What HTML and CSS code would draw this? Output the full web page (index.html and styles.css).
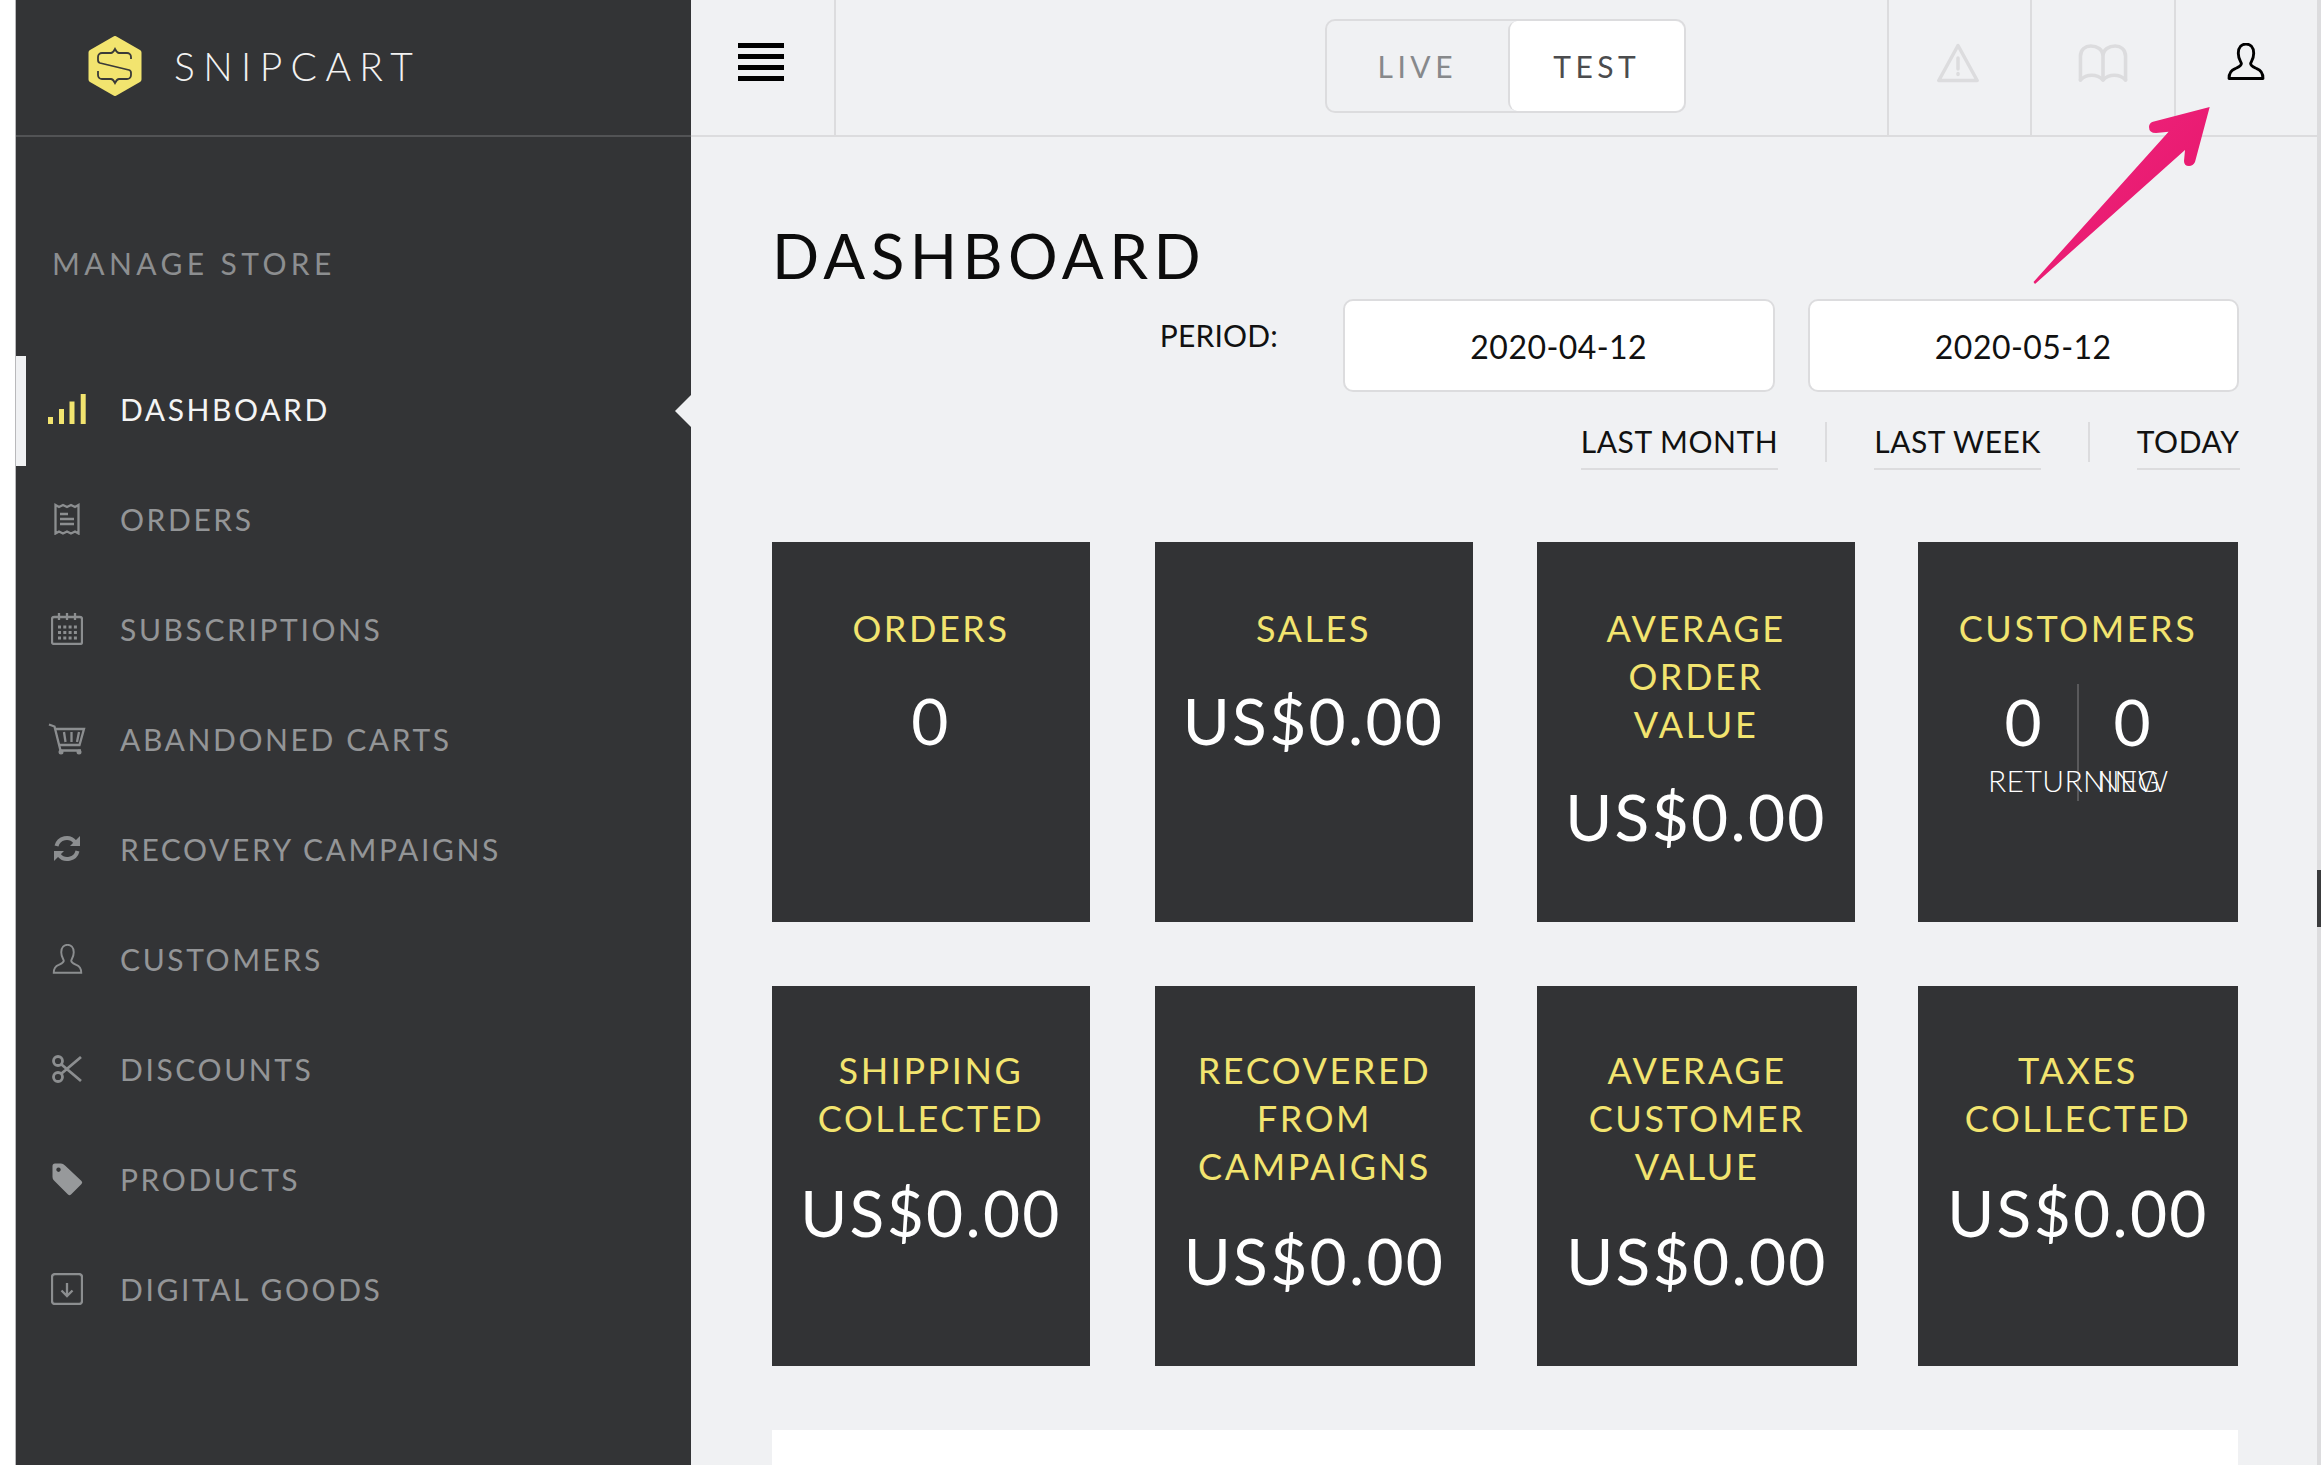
FILE: index.html
```html
<!DOCTYPE html>
<html lang="en">
<head>
<meta charset="utf-8">
<title>Snipcart Dashboard</title>
<link rel="stylesheet" href="styles.css">
</head>
<body>
<div class="app">
  <div class="edge-left"></div>
  <aside class="sidebar">
    <div class="brand">
      <svg class="logo" width="54" height="60" viewBox="0 0 54 60"><path class="logo-hex" d="M27 3 50.500 16.500V43.500L27 57 3.500 43.500V16.500Z"/><path class="logo-s" d="M43 23V21a4 4 0 0 0-4-4H31c-2 0-3-2-4-4-1 2-2 4-4 4H14a4 4 0 0 0-4 4v3a3 3 0 0 0 2 3L41 34a3 3 0 0 1 2 3v2a4 4 0 0 1-4 4H31c-2 0-3 2-4 4-1-2-2-4-4-4H14a4 4 0 0 1-4-4v-4"/></svg>
      <span class="brand-name">SNIPCART</span>
    </div>
    <div class="nav-title">MANAGE STORE</div>
    <nav class="nav">
      <a class="nav-item active"><span class="nav-icon"><svg width="38" height="30" viewBox="0 0 38 30"><rect class="bar" x="0" y="23" width="5" height="7"/><rect class="bar" x="11" y="15" width="5" height="15"/><rect class="bar" x="21.500" y="7.500" width="5" height="22.500"/><rect class="bar" x="32.700" y="0" width="5" height="30"/></svg></span><span>DASHBOARD</span></a>
      <a class="nav-item"><span class="nav-icon"><svg class="line" width="26" height="32" viewBox="0 0 26 32"><path d="M1.500 2v28.500l3.500-2 4 2 4-2 4 2 4-2 3.500 2V2l-3.500 2-4-2-4 2-4-2-4 2z"/><path d="M6 11h8M6 16h14M6 21h14"/></svg></span><span>ORDERS</span></a>
      <a class="nav-item"><span class="nav-icon"><svg class="line" width="32" height="32" viewBox="0 0 32 32"><rect x="1" y="4" width="30" height="27" rx="2"/><path d="M8 0v7M16 0v7M24 0v7"/><path class="dots" d="M7 14h19M7 19.500h19M7 25h19"/></svg></span><span>SUBSCRIPTIONS</span></a>
      <a class="nav-item"><span class="nav-icon"><svg class="line" width="38" height="32" viewBox="0 0 38 32"><path d="M1 1.500 6.500 3.500 12.500 27.500H33"/><path d="M7.500 6H36L31.500 22H11"/><path d="M16 9l1.500 10M23.500 9v10M31 9l-2 10"/><circle class="wheel" cx="13" cy="29" r="2.500"/><circle class="wheel" cx="31" cy="29" r="2.500"/></svg></span><span>ABANDONED CARTS</span></a>
      <a class="nav-item"><span class="nav-icon"><svg class="line thick" width="28" height="27" viewBox="0 0 28 27"><path d="M3.500 11A10.500 10.500 0 0 1 22 7"/><path class="solid" d="M27 1V11H17Z"/><path d="M24.500 16A10.500 10.500 0 0 1 6 20"/><path class="solid" d="M1 26V16H11Z"/></svg></span><span>RECOVERY CAMPAIGNS</span></a>
      <a class="nav-item"><span class="nav-icon"><svg class="line" width="31" height="30" viewBox="0 0 36 36"><path d="M1.500 34.500h33c0-5-2-8-6-9.500-3-1.500-6-2.500-6-5 0-1.500 3-4 3-10 0-6-3.500-9-7.500-9s-7.500 3-7.500 9c0 6 3 8.500 3 10 0 2.500-3 3.500-6 5-4 1.500-6 4.500-6 9.500z"/></svg></span><span>CUSTOMERS</span></a>
      <a class="nav-item"><span class="nav-icon"><svg class="line wide" width="30" height="30" viewBox="0 0 30 30"><circle cx="6" cy="7" r="4.500"/><circle cx="6" cy="23" r="4.500"/><path d="M9.500 10.500 29 27M9.500 19.500 29 3"/></svg></span><span>DISCOUNTS</span></a>
      <a class="nav-item"><span class="nav-icon"><svg width="31" height="33" viewBox="0 0 31 33"><path class="solid-tag" fill-rule="evenodd" d="M3 .5H9Q11 .5 13 2.500L29.500 18Q31 19.500 29.500 21L19 31.500Q17.500 33 16 31.500L2 17.500Q.5 16 .5 14V3Q.5 .5 3 .5ZM6.500 4.500a2.200 2.200 0 1 0 .01 0Z"/></svg></span><span>PRODUCTS</span></a>
      <a class="nav-item"><span class="nav-icon"><svg class="line" width="32" height="32" viewBox="0 0 32 32"><rect x="1" y="1" width="30" height="30" rx="3"/><path d="M16 10v13M10.500 17.500 16 23l5.500-5.500"/></svg></span><span>DIGITAL GOODS</span></a>
    </nav>
  </aside>
  <main class="main">
    <header class="topbar">
      <div class="menu-cell"><div class="burger"><i></i><i></i><i></i><i></i></div></div>
      <div class="mode">
        <span class="mode-live">LIVE</span>
        <span class="mode-test">TEST</span>
      </div>
      <div class="tools">
        <div class="tool"><svg class="muted warn" width="42" height="40" viewBox="0 0 42 40"><path d="M21 2.500 1.800 37.500H40.200Z"/><path d="M21 15V26M21 30.500v1"/></svg></div>
        <div class="tool"><svg class="muted" width="54" height="41" viewBox="0 0 50 40"><path d="M3 36V13C3 6 8 3 13 3 19 3 25 6 25 13V36M25 13C25 6 31 3 37 3 42 3 47 6 47 13V36"/><path d="M3 36C9 30 19 30 25 36 31 30 41 30 47 36"/></svg></div>
        <div class="tool"><svg class="ink" width="38" height="37" viewBox="0 0 36 36"><path d="M1.500 34.500h33c0-5-2-8-6-9.500-3-1.500-6-2.500-6-5 0-1.500 3-4 3-10 0-6-3.500-9-7.500-9s-7.500 3-7.500 9c0 6 3 8.500 3 10 0 2.500-3 3.500-6 5-4 1.500-6 4.500-6 9.500z"/></svg></div>
      </div>
    </header>
    <div class="content">
      <h1 class="page-title">DASHBOARD</h1>
      <div class="period">
        <span class="period-label">PERIOD:</span>
        <div class="date">2020-04-12</div>
        <div class="date">2020-05-12</div>
      </div>
      <div class="quick">
        <a class="quick-link">LAST MONTH</a>
        <span class="quick-sep"></span>
        <a class="quick-link">LAST WEEK</a>
        <span class="quick-sep"></span>
        <a class="quick-link">TODAY</a>
      </div>
      <section class="cards">
        <div class="card"><h2>ORDERS</h2><div class="value">0</div></div>
        <div class="card"><h2>SALES</h2><div class="value">US$0.00</div></div>
        <div class="card"><h2>AVERAGE<br>ORDER<br>VALUE</h2><div class="value">US$0.00</div></div>
        <div class="card w320"><h2>CUSTOMERS</h2>
          <div class="split">
            <div class="split-col first"><div class="split-num">0</div><div class="split-label">RETURNING</div></div>
            <div class="split-col"><div class="split-num">0</div><div class="split-label">NEW</div></div>
          </div>
        </div>
        <div class="card low"><h2>SHIPPING<br>COLLECTED</h2><div class="value">US$0.00</div></div>
        <div class="card low w320"><h2>RECOVERED<br>FROM<br>CAMPAIGNS</h2><div class="value">US$0.00</div></div>
        <div class="card low w320"><h2>AVERAGE<br>CUSTOMER<br>VALUE</h2><div class="value">US$0.00</div></div>
        <div class="card low w320"><h2>TAXES<br>COLLECTED</h2><div class="value">US$0.00</div></div>
      </section>
      <div class="panel"></div>
    </div>
    <svg class="arrow" width="184" height="182" viewBox="0 0 184 182"><defs><linearGradient id="pink" x1="0" y1="0" x2="1" y2="1"><stop offset="0" stop-color="#f0277f"/><stop offset=".7" stop-color="#e8196f"/><stop offset="1" stop-color="#d20b5d"/></linearGradient></defs><path fill="url(#pink)" d="M3.500 177 138.600 26.700 126 28Q119 28 119 22 119 18 123 16.700L179.700 2 165 57Q163 61 159 61 154 61 154 56L155 45 5 179Z"/></svg>
  </main>
  <div class="edge-right"><div class="edge-mark"></div></div>
</div>
</body>
</html>
```

FILE: styles.css
```css
* { box-sizing: border-box; }
html, body { margin: 0; padding: 0; height: 100%; }
body { font-family: Lato, "Open Sans", sans-serif; background: #f0f1f3; color: #111; overflow: hidden; }
.app { display: flex; height: 1465px; }
.edge-left { width: 16px; background: #fff; border-right: 1px solid #b9b9bb; flex: none; }
.sidebar { width: 674.500px; flex: none; background: #333436; color: #939597; }
.brand { height: 137px; border-bottom: 2px solid #525355; display: flex; align-items: center; padding: 0 0 3px 72px; gap: 32px; }
.logo { flex: none; }
.logo-hex { fill: #f2e46f; stroke: #f2e46f; stroke-width: 6; stroke-linejoin: round; }
.logo-s { fill: none; stroke: #3a3a38; stroke-width: 1.800; }
.brand-name { font-size: 39px; font-weight: 300; letter-spacing: 8.400px; color: #f2f2f2; }
.nav-title { font-size: 30px; letter-spacing: 4.400px; color: #8c8e90; padding: 104px 0 0 36px; line-height: 44px; height: 219px; }
.nav { display: flex; flex-direction: column; }
.nav-item { position: relative; height: 110.100px; display: flex; align-items: center; padding: 0 0 5px 32px; font-size: 30px; letter-spacing: 2.600px; }
.nav-item.active { color: #f4f4f4; padding-left: 22px; border-left: 10px solid #f0f1f3; }
.nav-item.active::after { content: ""; position: absolute; right: 0; top: 39px; border: 16px solid transparent; border-left-width: 0; border-right-color: #f0f1f3; }
.nav-icon { width: 38px; margin-right: 34px; display: flex; justify-content: center; flex: none; }
.bar { fill: #f2e46f; }
.line { fill: none; stroke: #8c8e90; stroke-width: 2.300; display: block; }
.line.thick { stroke-width: 4; }
.line.wide { stroke-width: 2.800; }
.line .solid { fill: #8c8e90; stroke: none; }
.line .wheel { fill: #8c8e90; stroke: none; }
.line .dots { stroke-width: 3; stroke-dasharray: 3 2.300; }
.solid-tag { fill: #97999b; }
.main { position: relative; flex: 1; min-width: 0; }
.topbar { height: 137px; border-bottom: 2px solid #dcdcde; display: grid; grid-template-columns: 1fr 361px 1fr; }
.menu-cell { width: 145px; border-right: 2px solid #dcdcde; display: flex; align-items: center; padding: 0 0 12px 47px; }
.burger { width: 46px; display: flex; flex-direction: column; gap: 6px; }
.burger i { display: block; height: 5px; background: #000; }
.mode { display: flex; height: 94px; margin: 19px -1.500px 0 1.500px; border: 2px solid #dcdcde; border-radius: 10px; font-size: 30px; letter-spacing: 4.500px; }
.mode-live { width: 181px; display: flex; align-items: center; justify-content: center; color: #87898b; }
.mode-test { flex: 1; display: flex; align-items: center; justify-content: center; color: #4b4c4e; background: #fff; border-radius: 9px; border-left: 2px solid #dcdcde; }
.tools { display: flex; justify-self: end; }
.tool { width: 143.500px; border-left: 2px solid #dcdcde; display: flex; justify-content: center; padding-top: 43px; }
.muted { fill: none; stroke: #dcdcde; stroke-width: 3.500; stroke-linejoin: round; stroke-linecap: round; }
.muted.warn { margin-left: -3px; }
.ink { fill: none; stroke: #000; stroke-width: 2.800; stroke-linejoin: round; }
.content { padding: 78px 79px 0 81.500px; }
.page-title { margin: 0; height: 84px; line-height: 80px; font-size: 62px; font-weight: 400; letter-spacing: 5.400px; color: #0c0c0c; }
.period { display: flex; justify-content: flex-end; align-items: flex-start; gap: 33px; height: 93px; margin-right: -1px; }
.period-label { font-size: 30px; line-height: 50px; margin-right: 32px; margin-top: 11px; letter-spacing: .2px; color: #111; }
.date { width: 431.500px; height: 93px; background: #fff; border: 2px solid #dcdcde; border-radius: 10px; display: flex; align-items: center; justify-content: center; font-size: 32px; letter-spacing: .45px; color: #111; padding-top: 2px; }
.quick { display: flex; justify-content: flex-end; gap: 47px; margin: 30px -1.500px 0 0; height: 48px; }
.quick-link { font-size: 30px; line-height: 38px; height: 48px; letter-spacing: .55px; border-bottom: 2px solid #dcdcde; color: #111; }
.quick-sep { width: 2px; height: 40px; background: #dcdcde; }
.cards { display: grid; grid-template-columns: 382.500px 382.500px 381px 320px; row-gap: 64px; margin-top: 72px; }
.card { width: 318px; height: 380px; background: #323335; text-align: center; padding-top: 62px; color: #fff; }
.card.w320 { width: 320px; }
.card.low { padding-top: 60px; }
.card h2 { margin: 0; font-size: 36px; line-height: 48px; font-weight: 400; letter-spacing: 2.600px; color: #f2e46f; }
.value { margin-top: 29px; font-size: 64px; line-height: 80px; font-weight: 400; letter-spacing: 2.300px; white-space: nowrap; }
.card.low .value { margin-top: 31px; }
.split { display: grid; grid-template-columns: 109px 107px; justify-content: center; margin-top: 32px; }
.split-col { height: 117px; padding: 0 18px; text-align: center; }
.split-col.first { border-right: 2px solid #59595b; }
.split-num { font-size: 64px; line-height: 75px; font-weight: 400; letter-spacing: 1px; }
.split-label { font-size: 30px; line-height: 42px; white-space: nowrap; font-weight: 300; letter-spacing: .4px; }
.panel { height: 100px; margin-top: 64px; background: #fff; }
.arrow { position: absolute; left: 1339.500px; top: 105px; }
.edge-right { width: 4px; flex: none; background: #dcdcde; padding-top: 870px; }
.edge-mark { height: 57px; background: #3a3b3d; }
```
